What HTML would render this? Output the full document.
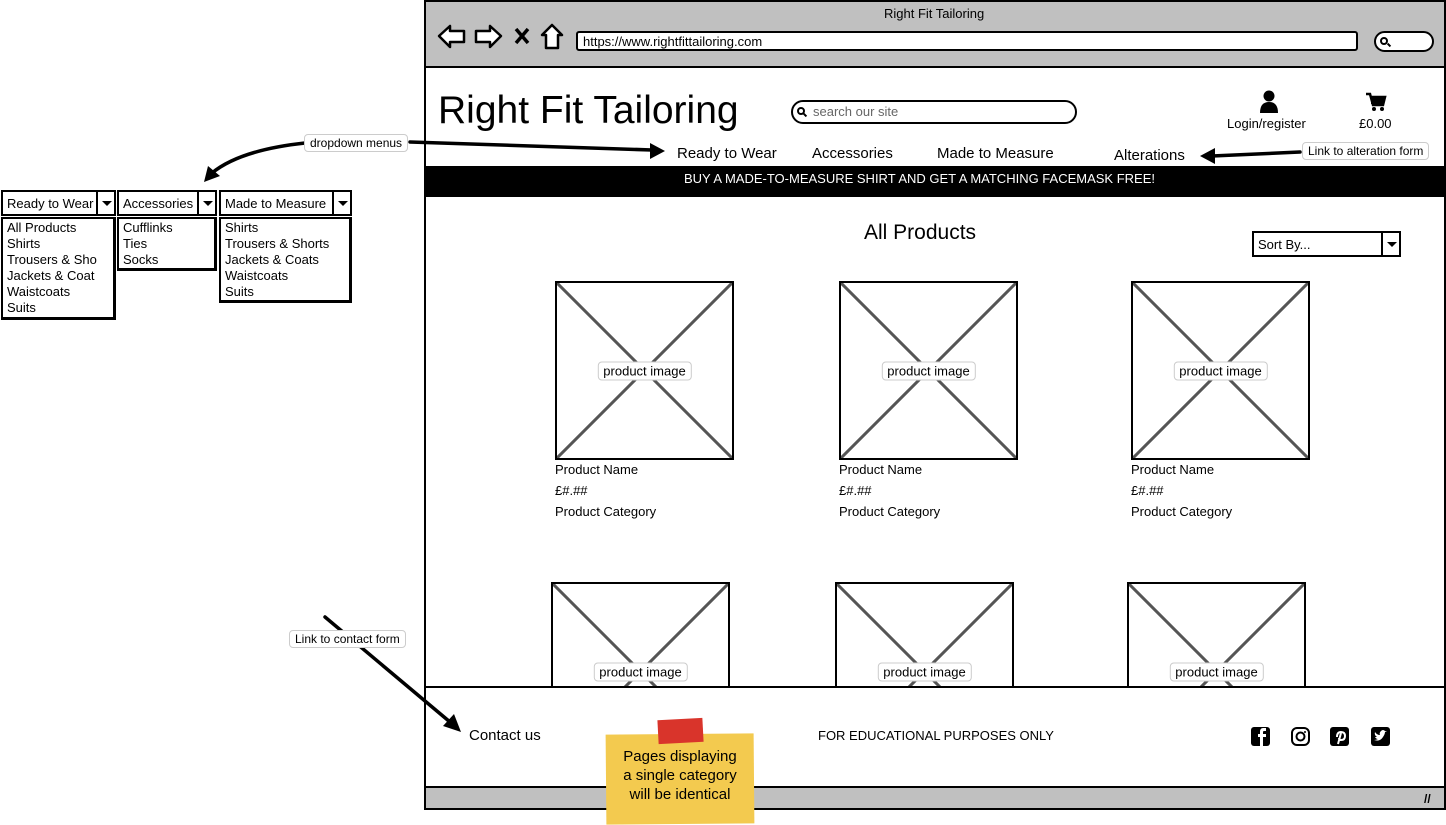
<!DOCTYPE html>
<html><head><meta charset="utf-8"><style>
*{box-sizing:border-box;margin:0;padding:0}
body{width:1446px;height:824px;background:#fff;position:relative;overflow:hidden;font-family:"Liberation Sans",sans-serif;color:#000}
.a{position:absolute}
.t{position:absolute;white-space:nowrap}
.img{position:absolute;width:179px;height:179px;border:2px solid #000;background:#fff}
.img svg{position:absolute;left:0;top:0}
.lbl{position:absolute;left:50%;top:50%;transform:translate(-50%,-50%);background:#fff;border:1px solid #ccc;border-radius:4px;font-size:13px;padding:1px 5px;white-space:nowrap}
.dd{position:absolute;border:2px solid #000;background:#fff;font-size:13px;height:26px}
.dd span{position:absolute;left:4px;top:4px;white-space:nowrap}
.dd i{position:absolute;right:0;top:0;width:18px;height:22px;border-left:2px solid #000}
.dd i:after{content:"";position:absolute;left:4px;top:9px;border-left:5px solid transparent;border-right:5px solid transparent;border-top:5px solid #000}
.list{position:absolute;border:2px solid #000;border-width:2px 3px 3px 2px;background:#fff;font-size:13px;line-height:16px;padding:1px 4px}
.note{position:absolute;background:#fff;border:1px solid #ccc;border-radius:4px;font-size:12px;padding:1px 5px;white-space:nowrap}
.pn{position:absolute;font-size:13px;line-height:21px}
</style></head><body>
<div class="a" style="left:424px;top:0;width:1022px;height:810px;border:2px solid #000;background:#fff"></div>
<div class="a" style="left:424px;top:0;width:1022px;height:68px;border:2px solid #000;background:#c0c0c0"></div>
<div class="t" style="left:884px;top:6px;font-size:13px">Right Fit Tailoring</div>
<svg class="a" style="left:436px;top:22px" width="135" height="30" viewBox="0 0 135 30">
<path d="M3 14 L14 4 L14 9 L28 9 L28 20 L14 20 L14 25 Z" fill="#fff" stroke="#000" stroke-width="2.5" stroke-linejoin="round"/>
<path d="M65 14 L54 4 L54 9 L40 9 L40 20 L54 20 L54 25 Z" fill="#fff" stroke="#000" stroke-width="2.5" stroke-linejoin="round"/>
<path d="M80 7 L92 21 M92 7 L80 21" stroke="#000" stroke-width="3.5"/>
<path d="M116 3 L106 13 L110 13 L110 26 L122 26 L122 13 L126 13 Z" fill="#fff" stroke="#000" stroke-width="2.5" stroke-linejoin="round"/>
</svg>
<div class="a" style="left:576px;top:31px;width:782px;height:20px;border:2px solid #000;border-radius:3px;background:#fff;font-size:13px;padding:1px 5px">https://www.rightfittailoring.com</div>
<div class="a" style="left:1374px;top:31px;width:60px;height:21px;border:2.5px solid #000;border-radius:11px;background:#fff"></div>
<div class="a" style="left:1380px;top:37px;width:8px;height:8px;border:2px solid #000;border-radius:50%"></div>
<div class="a" style="left:1387px;top:44px;width:4px;height:2px;background:#000;transform:rotate(45deg)"></div>
<div class="t" style="left:438px;top:89px;font-size:39px">Right Fit Tailoring</div>
<div class="a" style="left:791px;top:100px;width:286px;height:24px;border:2px solid #000;border-radius:12px"></div>
<div class="a" style="left:797px;top:107px;width:8px;height:8px;border:2px solid #000;border-radius:50%"></div>
<div class="a" style="left:803px;top:114px;width:4px;height:2px;background:#000;transform:rotate(45deg)"></div>
<div class="t" style="left:813px;top:104px;font-size:13px;color:#666">search our site</div>
<svg class="a" style="left:1259px;top:90px" width="20" height="24"><circle cx="10" cy="6" r="5.5"/><path d="M1 23 Q1 12 10 12 Q19 12 19 23 Z"/></svg>
<div class="t" style="left:1227px;top:116px;font-size:13px">Login/register</div>
<svg class="a" style="left:1365px;top:92px" width="22" height="20"><path d="M1 2 H5 L8 13 H18 L20 5 H6" fill="none" stroke="#000" stroke-width="2.5"/><rect x="6" y="5" width="13" height="7"/><circle cx="9" cy="17" r="2"/><circle cx="17" cy="17" r="2"/></svg>
<div class="t" style="left:1359px;top:116px;font-size:13px">£0.00</div>
<div class="t" style="left:677px;top:145px;font-size:15px">Ready to Wear</div>
<div class="t" style="left:812px;top:145px;font-size:15px">Accessories</div>
<div class="t" style="left:937px;top:145px;font-size:15px">Made to Measure</div>
<div class="t" style="left:1114px;top:147px;font-size:15px">Alterations</div>
<div class="a" style="left:424px;top:166px;width:1022px;height:31px;background:#000"></div>
<div class="t" style="left:684px;top:171px;font-size:13px;color:#fff">BUY A MADE-TO-MEASURE SHIRT AND GET A MATCHING FACEMASK FREE!</div>
<div class="t" style="left:864px;top:221px;font-size:21px">All Products</div>
<div class="dd" style="left:1252px;top:231px;width:149px;"><span>Sort By...</span><i></i></div>
<div class="img" style="left:555px;top:281px"><svg width="175" height="175"><path d="M0 0 L175 175 M175 0 L0 175" stroke="#555" stroke-width="3"/></svg><div class="lbl">product image</div></div>
<div class="img" style="left:839px;top:281px"><svg width="175" height="175"><path d="M0 0 L175 175 M175 0 L0 175" stroke="#555" stroke-width="3"/></svg><div class="lbl">product image</div></div>
<div class="img" style="left:1131px;top:281px"><svg width="175" height="175"><path d="M0 0 L175 175 M175 0 L0 175" stroke="#555" stroke-width="3"/></svg><div class="lbl">product image</div></div>
<div class="pn" style="left:555px;top:459px">Product Name<br>£#.##<br>Product Category</div>
<div class="pn" style="left:839px;top:459px">Product Name<br>£#.##<br>Product Category</div>
<div class="pn" style="left:1131px;top:459px">Product Name<br>£#.##<br>Product Category</div>
<div class="img" style="left:551px;top:582px"><svg width="175" height="175"><path d="M0 0 L175 175 M175 0 L0 175" stroke="#555" stroke-width="3"/></svg><div class="lbl">product image</div></div>
<div class="img" style="left:835px;top:582px"><svg width="175" height="175"><path d="M0 0 L175 175 M175 0 L0 175" stroke="#555" stroke-width="3"/></svg><div class="lbl">product image</div></div>
<div class="img" style="left:1127px;top:582px"><svg width="175" height="175"><path d="M0 0 L175 175 M175 0 L0 175" stroke="#555" stroke-width="3"/></svg><div class="lbl">product image</div></div>
<div class="a" style="left:424px;top:686px;width:1022px;height:102px;background:#fff;border-top:2px solid #000;border-left:2px solid #000;border-right:2px solid #000"></div>
<div class="a" style="left:424px;top:786px;width:1022px;height:24px;background:#c0c0c0;border:2px solid #000"></div>
<div class="t" style="left:1424px;top:792px;font-size:12px;font-weight:bold">//</div>
<div class="t" style="left:469px;top:727px;font-size:15px">Contact us</div>
<div class="t" style="left:818px;top:728px;font-size:13px">FOR EDUCATIONAL PURPOSES ONLY</div>
<svg class="a" style="left:1250px;top:726px" width="150" height="22">
<rect x="1" y="1" width="19" height="19" rx="3"/><path d="M13 20 V11 H16 V8 H13 V6 Q13 5 14 5 H16 V2 H13 Q10 2 10 6 V8 H8 V11 H10 V20" fill="#fff"/>
<rect x="42" y="2" width="17" height="17" rx="5" fill="none" stroke="#000" stroke-width="2"/><circle cx="50.5" cy="10.5" r="4" fill="none" stroke="#000" stroke-width="2"/><circle cx="55" cy="6" r="1"/>
<rect x="80" y="1" width="19" height="19" rx="3"/><path d="M88 18 L91 7 M87 11 Q87 6 91 6 Q95 6 95 10 Q95 14 91 14 Q89 14 89 12" fill="none" stroke="#fff" stroke-width="2"/>
<rect x="121" y="1" width="19" height="19" rx="3"/><path d="M124 14 Q130 16 133 11 Q135 8 135 6 L137 5 L135 5 Q133 3 131 5 Q129 7 130 9 Q127 9 125 6 Q124 9 127 11 L125 11 Q126 13 128 13 Q126 14 124 14Z" fill="#fff"/>
</svg>
<div class="a" style="left:606px;top:734px;width:148px;height:90px;background:#f3ca4f;transform:rotate(-0.5deg)"></div>
<div class="a" style="left:658px;top:719px;width:45px;height:24px;background:#d9342b;transform:rotate(-3deg)"></div>
<div class="t" style="left:606px;top:747px;width:148px;text-align:center;font-size:15px;line-height:19px">Pages displaying<br>a single category<br>will be identical</div>
<div class="dd" style="left:1px;top:190px;width:115px"><span>Ready to Wear</span><i></i></div>
<div class="list" style="left:1px;top:217px;width:115px;height:103px">All Products<br>Shirts<br>Trousers &amp; Sho<br>Jackets &amp; Coat<br>Waistcoats<br>Suits</div>
<div class="dd" style="left:117px;top:190px;width:100px"><span>Accessories</span><i></i></div>
<div class="list" style="left:117px;top:217px;width:100px;height:54px">Cufflinks<br>Ties<br>Socks</div>
<div class="dd" style="left:219px;top:190px;width:133px"><span>Made to Measure</span><i></i></div>
<div class="list" style="left:219px;top:217px;width:133px;height:86px">Shirts<br>Trousers &amp; Shorts<br>Jackets &amp; Coats<br>Waistcoats<br>Suits</div>
<svg class="a" style="left:0;top:0" width="1446" height="824">
<g fill="none" stroke="#000" stroke-width="3.5" stroke-linecap="round">
<path d="M305 143 Q240 150 212 173"/>
<path d="M410 142 L652 150"/>
<path d="M1300 152 L1212 156"/>
<path d="M325 617 L450 722"/>
</g>
<path d="M204 182 L208 166 L220 176 Z"/>
<path d="M665 151 L650 143 L650 159 Z"/>
<path d="M1200 156 L1215 148 L1215 164 Z"/>
<path d="M461 732 L443 726 L454 714 Z"/>
</svg>
<div class="note" style="left:304px;top:134px">dropdown menus</div>
<div class="note" style="left:1302px;top:142px">Link to alteration form</div>
<div class="note" style="left:289px;top:630px">Link to contact form</div>
</body></html>
